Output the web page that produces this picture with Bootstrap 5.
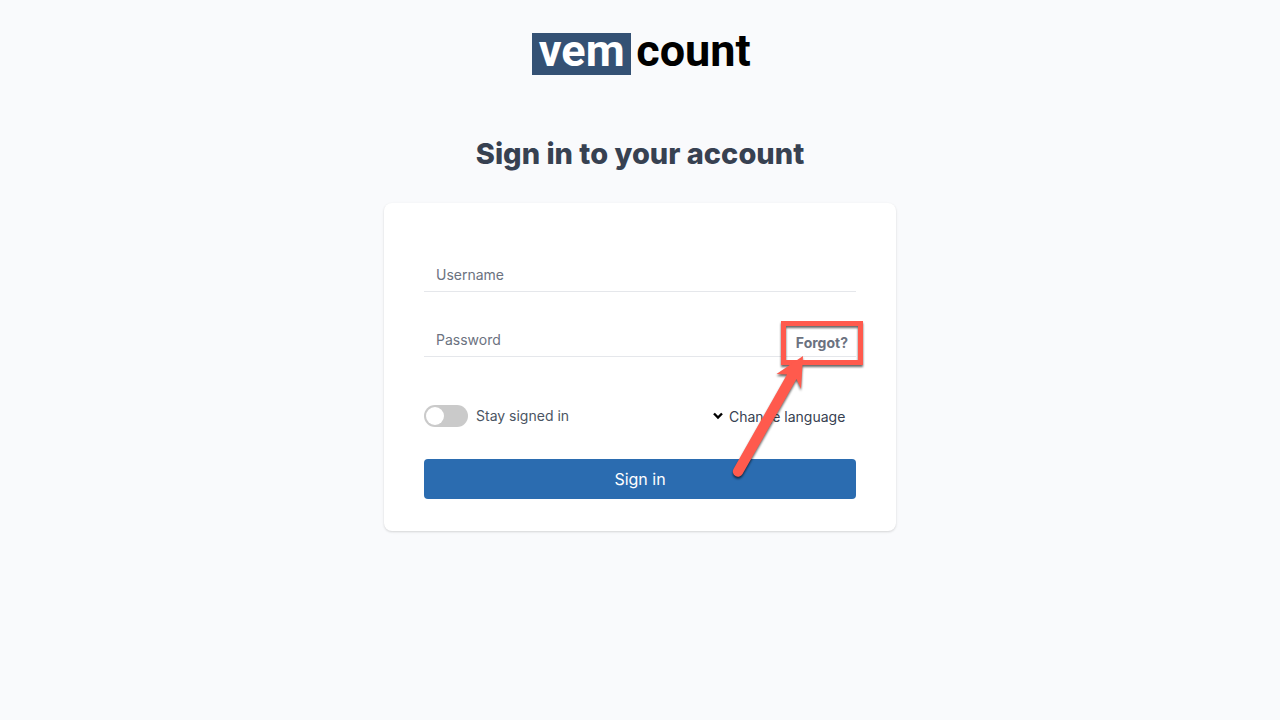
<!DOCTYPE html>
<html lang="en">
<head>
<meta charset="utf-8">
<meta name="viewport" content="width=device-width, initial-scale=1">
<title>Sign in - Vemcount</title>
<link href="https://cdn.jsdelivr.net/npm/bootstrap@5.3.0/dist/css/bootstrap.min.css" rel="stylesheet">
<style>
body { background: #f9fafc; color: #374151; font-family: Inter, sans-serif; font-size: 14px; line-height: 20px; }
.brand { font-family: Roboto, sans-serif; font-weight: 700; font-size: 45px; color: #000; margin-top: 33px; padding-left: 3px; }
.brand-box { background: #345174; color: #fff; height: 42px; width: 99px; line-height: 35px; }
.brand-rest { line-height: 35px; margin-left: 5px; }
.title { font-size: 29px; line-height: 36px; font-weight: 800; color: #374151; margin: 61px 0 31px; }
.login-wrap { max-width: 512px; }
.login-card { border: 0; border-radius: 8px; padding: 52px 40px 32px; box-shadow: 0 1px 3px rgba(0,0,0,.1), 0 1px 2px rgba(0,0,0,.06); }
.field { border-bottom: 1px solid #e5e7eb; height: 37px; }
.field + .field { margin-top: 28px; }
.field .form-control { border: 0; background: transparent; padding: 10px 12px 6px; font-size: 14px; line-height: 20px; box-shadow: none; }
.field .form-control::placeholder { color: #6b7280; opacity: 1; }
.forgot { color: #6b7280; font-weight: 700; text-decoration: none; padding: 13px 8px 4px; }
.options { margin: 48px 0 32px; height: 22px; }
.form-check.form-switch.stay { padding: 0; margin: 0; min-height: 0; gap: 8px; }
.form-switch.stay .form-check-input { width: 44px; height: 22px; margin: 0; border: 0; background-color: #cacaca; background-size: 22px 22px; background-position: left center;
  background-image: url("data:image/svg+xml,%3Csvg xmlns='http://www.w3.org/2000/svg' viewBox='0 0 22 22'%3E%3Ccircle cx='11' cy='11' r='9' fill='white'/%3E%3C/svg%3E"); }
.form-switch.stay .form-check-input:checked { background-color: #2b6cb0; background-position: right center; }
.stay label { color: #4b5563; }
.language { appearance: none; border: 0; background: transparent; color: #374151; padding: 2px 10px 0 6px; line-height: 20px; }
.btn-signin { background: #2b6cb0; color: #fff; height: 40px; padding: 8px; font-size: 16px; line-height: 24px; border: 0; border-radius: 4px; }
.btn-signin:hover { background: #2c5282; color: #fff; }
.callout { top: 107px; right: 16px; pointer-events: none; filter: drop-shadow(0 2px 1px rgba(0,0,0,.6)); }
</style>
</head>
<body>
<main class="login-wrap container-fluid px-0 pt-0 pb-5">
  <div class="brand d-flex justify-content-center">
    <span class="brand-box text-center">vem</span><span class="brand-rest">count</span>
  </div>
  <h1 class="title text-center">Sign in to your account</h1>
  <form class="card login-card position-relative">
    <div class="field d-flex">
      <input class="form-control" type="text" placeholder="Username" aria-label="Username" autocomplete="username">
    </div>
    <div class="field d-flex">
      <input class="form-control" type="password" placeholder="Password" aria-label="Password" autocomplete="current-password">
      <a class="forgot" href="#">Forgot?</a>
    </div>
    <div class="options d-flex align-items-center justify-content-between">
      <div class="form-check form-switch stay d-flex align-items-center">
        <input class="form-check-input" type="checkbox" role="switch" id="stay">
        <label for="stay">Stay signed in</label>
      </div>
      <div class="d-flex align-items-center">
        <svg width="10" height="8" viewBox="0 0 10 8" fill="none" stroke="#000" stroke-width="2.4" aria-hidden="true"><path d="M1 1.500 5 5.500 9 1.500"/></svg>
        <select class="language" aria-label="Language"><option>Change language</option></select>
      </div>
    </div>
    <button class="btn btn-signin w-100" type="submit">Sign in</button>
    <svg class="callout position-absolute" width="180" height="180" viewBox="700 310 180 180" aria-hidden="true">
      <rect x="783.5" y="323.5" width="77" height="39" fill="none" stroke="#ff5a4d" stroke-width="5"/>
      <path fill="#ff5a4d" d="M733.5 469 787 374.500 776.500 374 803 356 801 389 796.500 379 742.500 474A5 5 0 0 1 733.500 469Z"/>
    </svg>
  </form>
</main>
<script src="https://cdn.jsdelivr.net/npm/bootstrap@5.3.0/dist/js/bootstrap.bundle.min.js"></script>
</body>
</html>
